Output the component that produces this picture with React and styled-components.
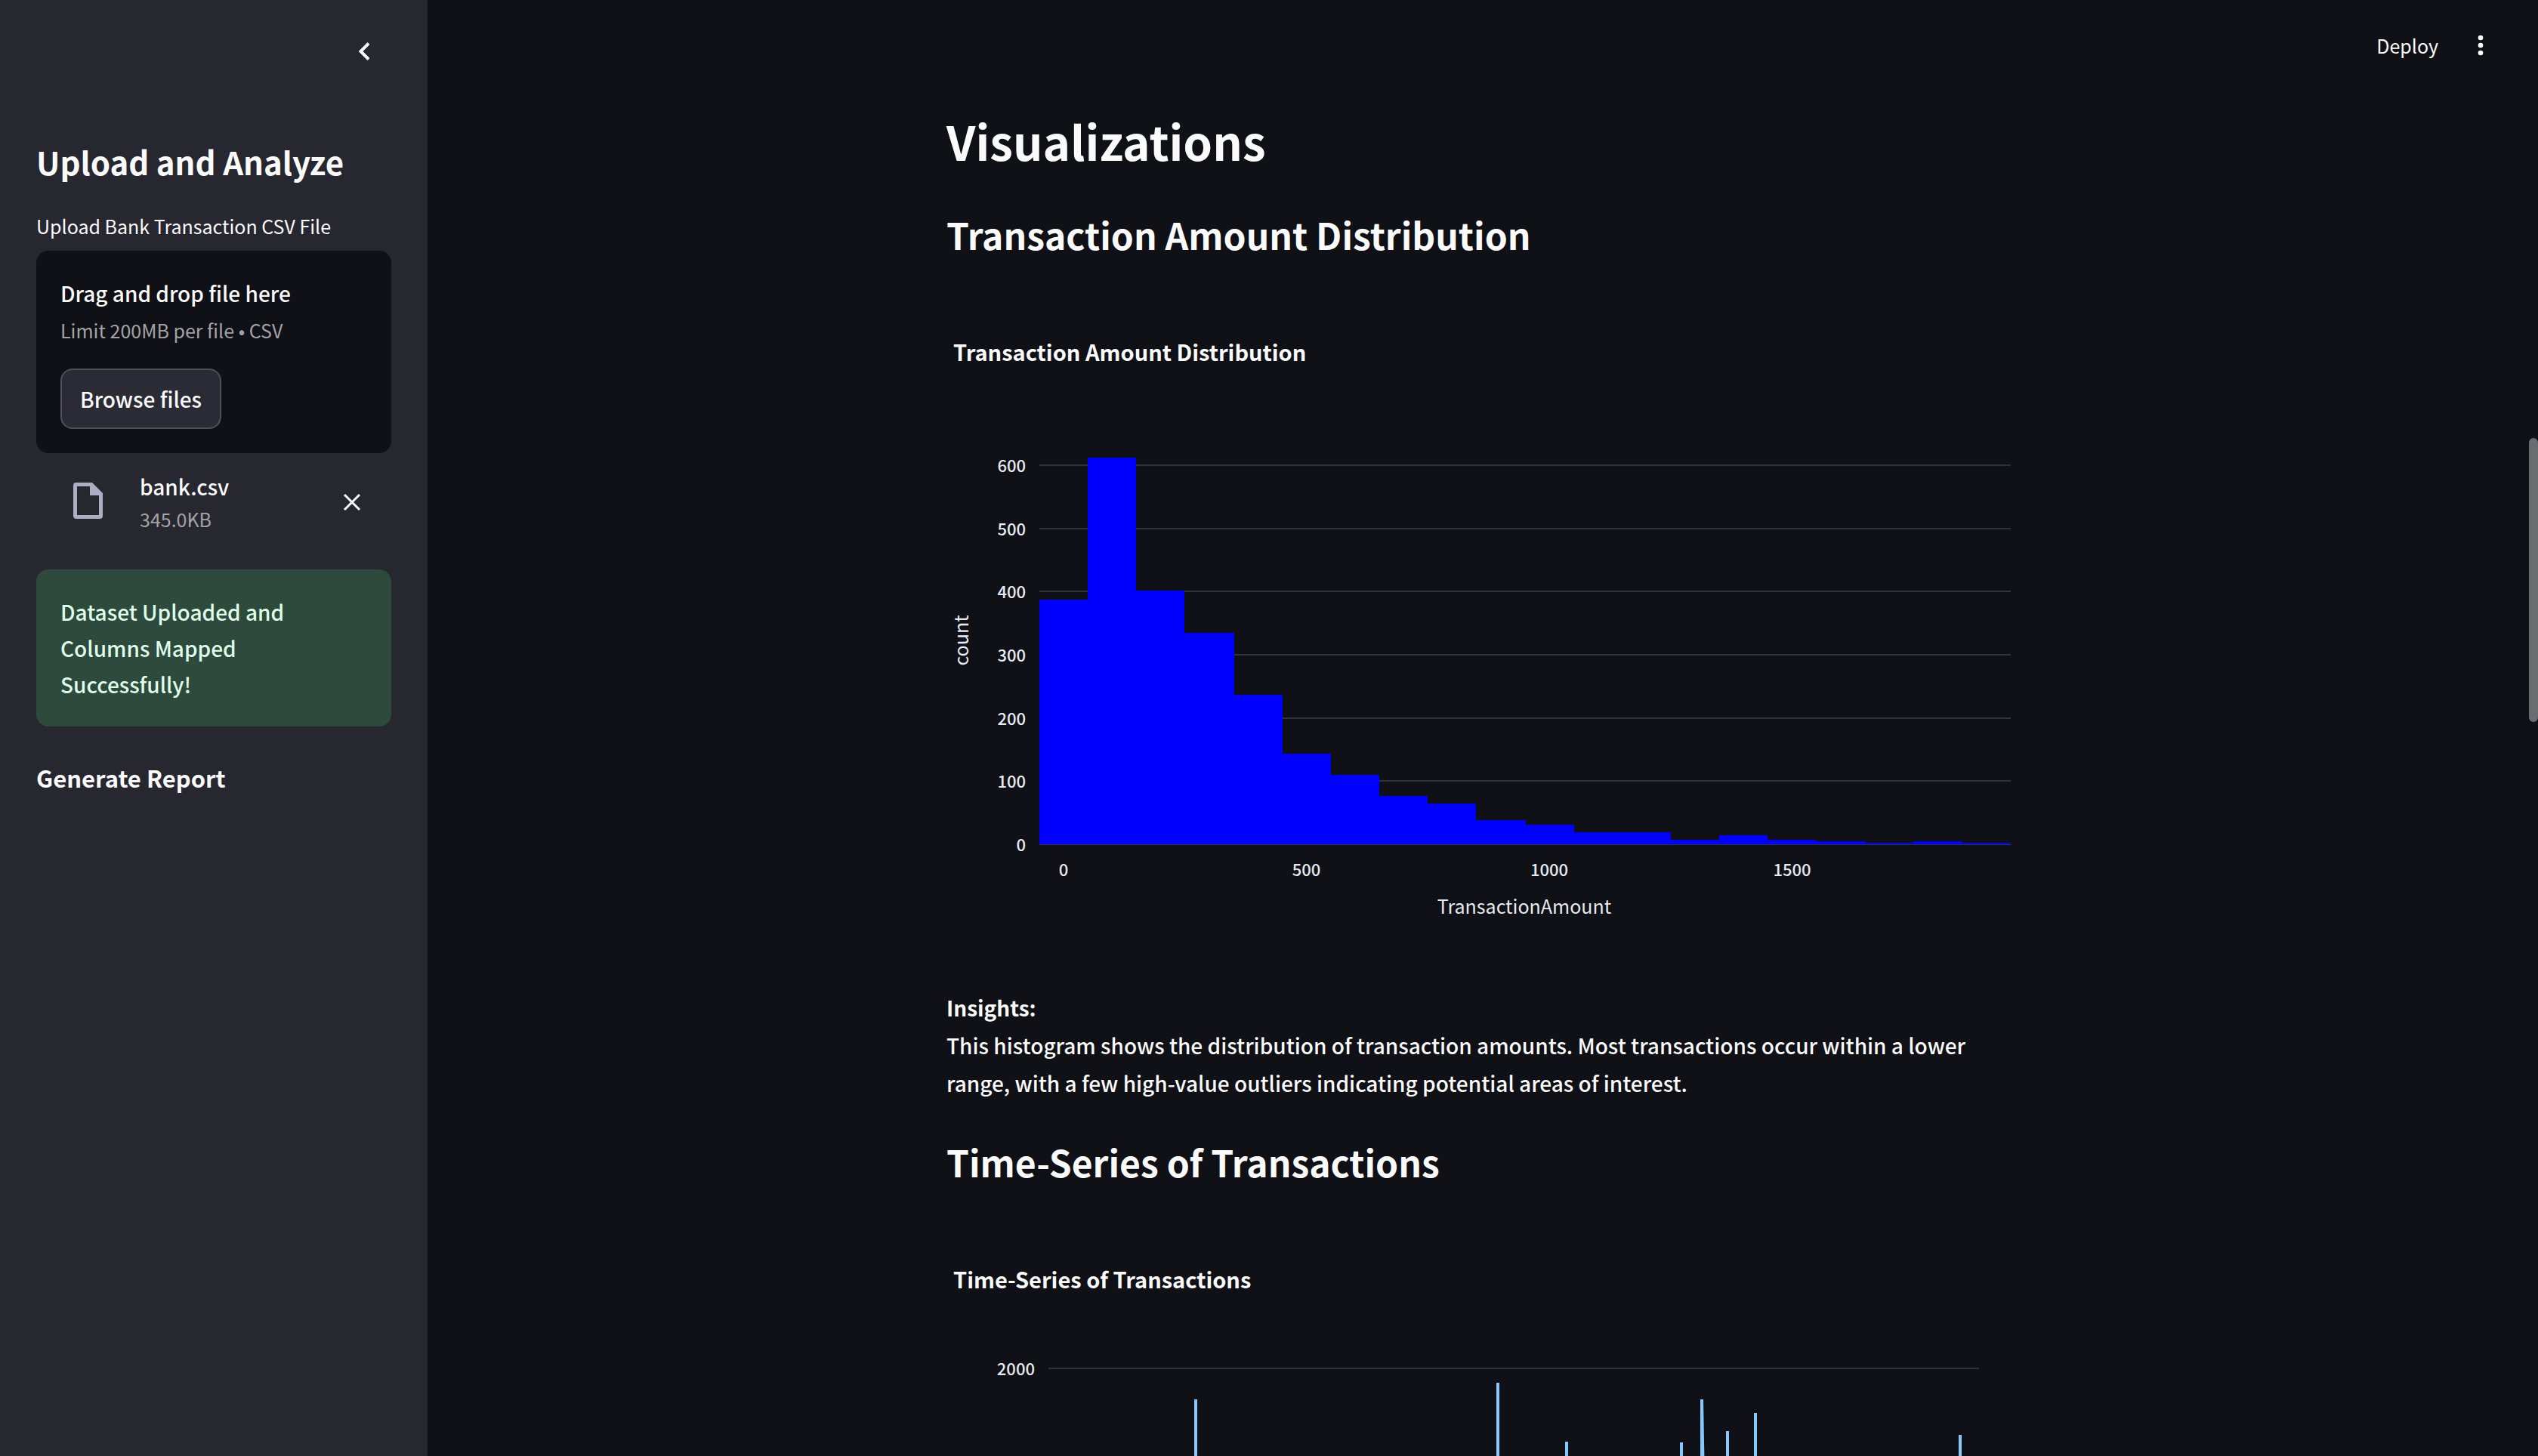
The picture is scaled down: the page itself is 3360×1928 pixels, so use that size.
import React, { useRef } from "react";
import styled, { createGlobalStyle } from "styled-components";

const color = {
  page: "#101116",
  sidebar: "#272730",
  text: "#fafafa",
  muted: "#a3a3a7",
  icon: "#acafc4",
  successBg: "#2e4a3c",
  successText: "#dffde9",
  tick: "#e6eaf1",
  grid: "#31323e",
  bar: "#0000ff",
  series: "#83c9ff",
};

const GlobalStyle = createGlobalStyle`
  *, *::before, *::after { box-sizing: border-box; }
  body {
    margin: 0;
    background: ${color.page};
    color: ${color.text};
    font-family: "Noto Sans CJK JP", "Noto Sans", sans-serif;
    font-size: 28px;
    font-weight: 500;
    line-height: 48px;
  }
  h1, h2, h3, p { margin: 0; }
  button { font: inherit; color: inherit; cursor: pointer; }
`;

const Shell = styled.div`
  display: flex;
  height: 100vh;
  overflow: hidden;
`;

const Sidebar = styled.aside`
  flex: none;
  width: 566px;
  padding: 0 48px;
  background: ${color.sidebar};
`;

const SidebarHeader = styled.div`
  display: flex;
  justify-content: flex-end;
  align-items: center;
  height: 136px;
`;

const IconButton = styled.button`
  display: flex;
  align-items: center;
  justify-content: center;
  width: ${(p) => p.$width}px;
  height: 56px;
  padding: 0;
  border: 0;
  background: none;
`;

const SidebarTitle = styled.h2`
  margin-top: 52px;
  font-size: 42px;
  font-weight: 700;
  line-height: 52px;
`;

const FieldLabel = styled.label`
  display: block;
  margin: 41px 0 15px;
  font-size: 25px;
  font-weight: 400;
  line-height: 36px;
`;

const DropZone = styled.section`
  padding: 32px;
  border-radius: 16px;
  background: ${color.page};
`;

const Caption = styled.p`
  color: ${color.muted};
  font-size: 25px;
  font-weight: 400;
  line-height: ${(p) => p.$leading}px;
`;

const BrowseButton = styled.button`
  display: flex;
  align-items: center;
  height: 80px;
  margin-top: 26px;
  padding: 0 24px;
  border: 2px solid #505058;
  border-radius: 16px;
  background: #2b2b36;
`;

const FileRow = styled.div`
  display: flex;
  align-items: center;
  padding: 22px 32px 46px;
`;

const FileIconSlot = styled.div`
  display: flex;
  justify-content: center;
  width: 72px;
  margin-right: 33px;
`;

const FileInfo = styled.div`
  flex: 1;
`;

const FileName = styled.p`
  line-height: 44px;
`;

const Success = styled.div`
  padding: 32px;
  border-radius: 16px;
  background: ${color.successBg};
  color: ${color.successText};
`;

const ReportTitle = styled.h3`
  margin-top: 48px;
  font-size: 31px;
  font-weight: 700;
  line-height: 40px;
`;

const Main = styled.main`
  flex: 1;
  min-width: 0;
  overflow: hidden;
`;

const Toolbar = styled.header`
  display: flex;
  justify-content: flex-end;
  align-items: center;
  gap: 36px;
  height: 120px;
  padding-right: 44px;
`;

const DeployButton = styled.button`
  padding: 0;
  border: 0;
  background: none;
  font-size: 25px;
  font-weight: 400;
`;

const Content = styled.div`
  width: 100%;
  max-width: 1408px;
  margin: 0 auto;
  padding-top: 28px;
`;

const PageTitle = styled.h1`
  margin-bottom: 56px;
  font-size: 62px;
  font-weight: 700;
  line-height: 76px;
`;

const SectionTitle = styled.h2`
  font-size: 48px;
  font-weight: 700;
  line-height: 60px;
`;

const Chart = styled.svg`
  display: block;
  width: 100%;
  height: auto;
  margin: 33px 0 36px;
  overflow: visible;
`;

const ChartTitle = styled.text`
  fill: ${color.text};
  font-size: 29px;
  font-weight: 700;
`;

const TickLabel = styled.text`
  fill: ${color.tick};
  font-size: 22px;
  text-anchor: ${(p) => p.$anchor};
`;

const AxisTitle = styled.text`
  fill: ${color.tick};
  font-size: 25px;
  font-weight: 400;
  text-anchor: middle;
`;

const GridLine = styled.line`
  stroke: ${color.grid};
  stroke-width: 2;
`;

const Insights = styled.p`
  margin-bottom: 49px;
  line-height: 50px;
`;

const ScrollTrack = styled.div`
  flex: none;
  width: 12px;
  padding-top: 580px;
`;

const ScrollThumb = styled.div`
  height: 376px;
  border-radius: 6px;
  background: #6b6c70;
`;

/* Histogram geometry: bin edges and bar heights in chart units */
const plot = { left: 123, right: 1409, zero: 745 };
const binEdges = [
  123, 187, 251, 315, 381, 445, 509, 573, 637, 701, 767, 831, 895, 959, 1023,
  1087, 1151, 1217, 1281, 1345, 1409,
];
const barHeights = [
  324, 512, 336, 280, 198, 120, 92, 64, 54, 32, 26, 16, 16, 6, 12, 6, 4, 2, 4, 2,
];
const countTicks = [600, 500, 400, 300, 200, 100, 0];
const amountTicks = [0, 500, 1000, 1500];
const countY = (n) => Math.round(plot.zero - n * 0.837);
const amountX = (n) => 155 + n * 0.643;

function Histogram() {
  return (
    <Chart viewBox="0 0 1408 900" role="img" aria-label="Histogram of transaction amounts">
      <ChartTitle x="9" y="105">Transaction Amount Distribution</ChartTitle>
      {countTicks.map((n) => (
        <g key={n}>
          <GridLine x1={plot.left} x2={plot.right} y1={countY(n)} y2={countY(n)} />
          <TickLabel x="105" y={countY(n) + 9} $anchor="end">{n}</TickLabel>
        </g>
      ))}
      <g fill={color.bar} shapeRendering="crispEdges">
        {barHeights.map((h, i) => (
          <rect
            key={binEdges[i]}
            x={binEdges[i]}
            y={plot.zero - h}
            width={binEdges[i + 1] - binEdges[i]}
            height={h}
          />
        ))}
      </g>
      {amountTicks.map((n) => (
        <TickLabel key={n} x={amountX(n)} y="787" $anchor="middle">{n}</TickLabel>
      ))}
      <AxisTitle x="765" y="837">TransactionAmount</AxisTitle>
      <AxisTitle transform="translate(29 475) rotate(-90)">count</AxisTitle>
    </Chart>
  );
}

const spikes = [
  [330, 252],
  [730, 230],
  [821, 308],
  [973, 309],
  [1000, 252],
  [1034, 294],
  [1071, 270],
  [1342, 299],
];

function TimeSeries() {
  return (
    <Chart viewBox="0 0 1408 900" role="img" aria-label="Transactions over time">
      <ChartTitle x="9" y="105">Time-Series of Transactions</ChartTitle>
      <GridLine x1="135" x2="1367" y1="211" y2="211" />
      <TickLabel x="117" y="220" $anchor="end">2000</TickLabel>
      <g fill="none" stroke={color.series} strokeWidth="4">
        {spikes.map(([x, top]) => (
          <path key={x} d={`M${x} ${top}V745`} />
        ))}
        <path d="M1000 253L1009 745" />
      </g>
    </Chart>
  );
}

export default function App() {
  const fileInput = useRef(null);
  return (
    <>
      <GlobalStyle />
      <Shell>
        <Sidebar>
          <SidebarHeader>
            <IconButton $width={72} aria-label="Collapse sidebar">
              <svg width="24" height="32" viewBox="0 0 24 32" fill="none" stroke={color.text} strokeWidth="4">
                <path d="M18 5.500L7.500 16L18 26.500" />
              </svg>
            </IconButton>
          </SidebarHeader>
          <SidebarTitle>Upload and Analyze</SidebarTitle>
          <FieldLabel htmlFor="csv-file">Upload Bank Transaction CSV File</FieldLabel>
          <DropZone>
            <input id="csv-file" ref={fileInput} type="file" accept=".csv" hidden />
            <p>Drag and drop file here</p>
            <Caption $leading={50}>Limit 200MB per file • CSV</Caption>
            <BrowseButton type="button" onClick={() => fileInput.current.click()}>
              Browse files
            </BrowseButton>
          </DropZone>
          <FileRow>
            <FileIconSlot>
              <svg width="40" height="54" viewBox="-1 -1 40 54">
                <path
                  fill={color.icon}
                  fillRule="evenodd"
                  d="M4 0H25L39 14V44Q39 48 35 48H4Q0 48 0 44V4Q0 0 4 0ZM5 5V43H34V17H22V5Z"
                />
              </svg>
            </FileIconSlot>
            <FileInfo>
              <FileName>bank.csv</FileName>
              <Caption $leading={42}>345.0KB</Caption>
            </FileInfo>
            <IconButton $width={40} aria-label="Remove bank.csv">
              <svg width="24" height="24" viewBox="0 0 24 24" fill="none" stroke={color.text} strokeWidth="3">
                <path d="M2 2L22 22M22 2L2 22" />
              </svg>
            </IconButton>
          </FileRow>
          <Success role="status">Dataset Uploaded and Columns Mapped Successfully!</Success>
          <ReportTitle>Generate Report</ReportTitle>
        </Sidebar>
        <Main>
          <Toolbar>
            <DeployButton type="button">Deploy</DeployButton>
            <IconButton $width={40} aria-label="Main menu">
              <svg width="8" height="28" viewBox="0 0 8 28" fill={color.text}>
                <circle cx="4" cy="4" r="3.300" />
                <circle cx="4" cy="14" r="3.300" />
                <circle cx="4" cy="24" r="3.300" />
              </svg>
            </IconButton>
          </Toolbar>
          <Content>
            <PageTitle>Visualizations</PageTitle>
            <SectionTitle>Transaction Amount Distribution</SectionTitle>
            <Histogram />
            <Insights>
              <strong>Insights:</strong>
              <br />
              This histogram shows the distribution of transaction amounts. Most transactions occur
              within a lower range, with a few high-value outliers indicating potential areas of
              interest.
            </Insights>
            <SectionTitle>Time-Series of Transactions</SectionTitle>
            <TimeSeries />
          </Content>
        </Main>
        <ScrollTrack aria-hidden="true">
          <ScrollThumb />
        </ScrollTrack>
      </Shell>
    </>
  );
}
